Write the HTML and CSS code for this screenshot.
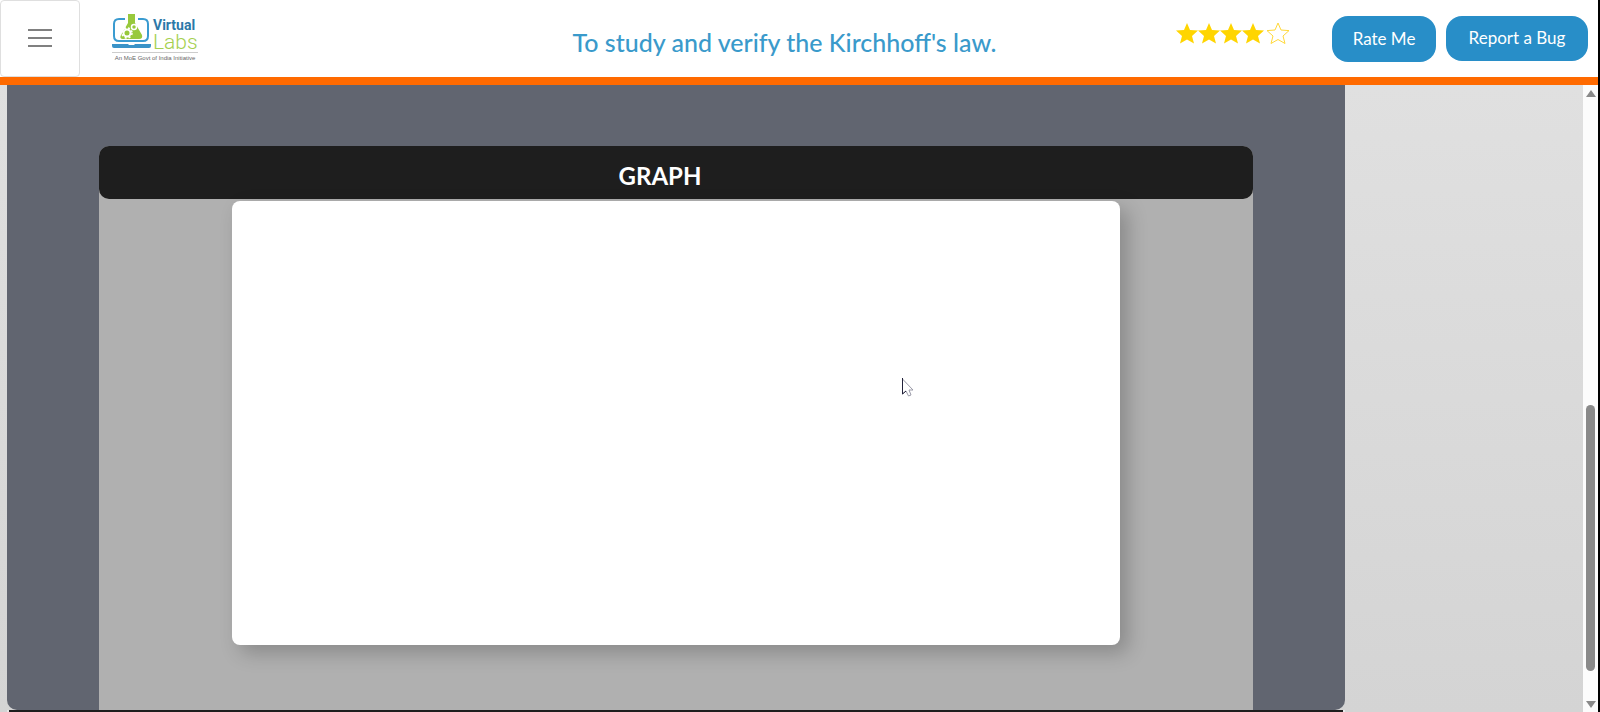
FILE: index.html
```html
<!DOCTYPE html>
<html lang="en">
<head>
<meta charset="utf-8">
<title>Virtual Labs</title>
<link rel="stylesheet" href="styles.css">
</head>
<body>
<header class="header">
  <button class="menu" type="button" aria-label="Menu"><span></span><span></span><span></span></button>
  <a class="logo" href="#" aria-label="Virtual Labs">
    <span class="logo-row">
      <svg class="logo-mark" width="39" height="34" viewBox="0 0 39 34">
        <path d="M13 5H7Q2 5 2 10V22Q2 27 7 27H31Q36 27 36 22V10Q36 5 31 5H26" fill="none" stroke="#3a9bd0" stroke-width="2"/>
        <path d="M16 0H23V9L30 21Q31 25 27 25H11Q7 25 9 21L16 9Z" fill="#98c93c"/>
        <circle cx="15" cy="19" r="3.500" fill="none" stroke="#fff" stroke-width="2"/>
        <circle cx="15" cy="19" r="5" fill="none" stroke="#fff" stroke-width="1.500" stroke-dasharray="2 2"/>
        <circle cx="22" cy="13" r="2.500" fill="none" stroke="#fff" stroke-width="1.500"/>
        <path d="M0 30H16L17 31H22L23 30H39V32Q39 34 37 34H2Q0 34 0 32Z" fill="#3a93c8"/>
      </svg>
      <span class="logo-name"><b>Virtual</b><i>Labs</i></span>
    </span>
    <small class="logo-tag">An MoE Govt of India Initiative</small>
  </a>
  <h1 class="title">To study and verify the Kirchhoff's law.</h1>
  <svg class="stars" width="116" height="22" viewBox="0 0 116 22" role="img" aria-label="4 of 5 stars">
    <defs><path id="star" d="M0-11L3-4L11-3.400L5 2L7 9.500L0 5.500L-7 9.500L-5 2L-11-3.400L-3-4Z"/></defs>
    <g fill="#ffd500">
      <use href="#star" x="12" y="12"/><use href="#star" x="34" y="12"/><use href="#star" x="56" y="12"/><use href="#star" x="78" y="12"/>
    </g>
    <use href="#star" x="103" y="12" fill="#fff" stroke="#ffd83a" stroke-width="1"/>
  </svg>
  <div class="actions">
    <button class="btn rate" type="button">Rate Me</button>
    <button class="btn" type="button">Report a Bug</button>
  </div>
</header>
<div class="body">
  <main class="content">
    <div class="panel">
      <section class="graph">
        <h2 class="graph-title">GRAPH</h2>
        <div class="plot"></div>
      </section>
    </div>
    <div class="next"></div>
  </main>
  <div class="scroll">
    <span class="arrow up"></span>
    <span class="thumb"></span>
    <span class="arrow down"></span>
  </div>
</div>
<svg class="cursor" width="12" height="19" viewBox="0 0 12 19">
  <path d="M.5 1V16L4 13L6.500 18L9 17L7 12H11Z" fill="#fff" stroke="#9a9aa8"/>
  <path d="M.5 0V16L4 13" fill="none" stroke="#22223a"/>
</svg>
</body>
</html>
```
FILE: styles.css
```css
* { box-sizing: border-box; }
body {
  margin: 0;
  height: 100vh;
  display: flex;
  flex-direction: column;
  overflow: hidden;
  border-right: 2px solid #000;
  background: #fff;
  font-family: Lato, "Open Sans", sans-serif;
}
.header {
  display: flex;
  align-items: flex-start;
  padding-right: 10px;
  border-bottom: 8px solid #ff6a00;
  background: #fff;
}
.menu {
  width: 80px;
  height: 77px;
  padding: 0 0 2px;
  display: flex;
  flex-direction: column;
  align-items: center;
  justify-content: center;
  gap: 6px;
  background: #fff;
  border: 1px solid #dfdfdf;
  border-radius: 4px;
}
.menu span { width: 24px; height: 2px; background: #808080; }
.logo {
  width: 86px;
  margin: 14px 0 0 32px;
  text-decoration: none;
}
.logo-row { display: flex; gap: 2px; height: 38px; }
.logo-mark { flex: none; }
.logo-name { display: flex; flex-direction: column; padding-top: 3px; }
.logo-name b { font: 700 14px/16px Roboto, sans-serif; color: #2c78a8; }
.logo-name i { font: 300 21px/19px Roboto, sans-serif; color: #a5d04f; }
.logo-tag {
  display: block;
  border-top: 1px solid #ccc;
  font: 6px/10px "Liberation Sans", sans-serif;
  text-align: center;
  white-space: nowrap;
  color: #666;
}
.title {
  flex: 1;
  margin: 0;
  padding: 26px 0 0 196px;
  text-align: center;
  white-space: nowrap;
  font-size: 25px;
  line-height: 32px;
  font-weight: 500;
  color: #3a9acb;
}
.stars { margin: 22px 41px 0 0; }
.actions { display: flex; align-items: flex-start; gap: 10px; padding-top: 16px; }
.btn {
  height: 45px;
  padding: 0 20px 2px;
  border: 0;
  border-radius: 16px;
  background: #288ec8;
  color: #fff;
  font-family: inherit;
  font-size: 17px;
  min-width: 142px;
}
.rate { height: 46px; min-width: 104px; }
.body { flex: 1; min-height: 0; display: flex; }
.content {
  flex: 1;
  display: flex;
  flex-direction: column;
  padding-left: 7px;
  background: linear-gradient(#e0e0e0, #d4d4d4);
}
.panel {
  flex: 1;
  width: 84.9%;
  padding-top: 61px;
  display: flex;
  justify-content: center;
  background: #616570;
  border-radius: 0 0 10px 10px;
}
.graph { width: 86.3%; background: #b0b0b0; border-radius: 10px 10px 0 0; }
.graph-title {
  margin: 0 0 2px;
  padding: 6px 32px 0 0;
  text-align: center;
  font-size: 24px;
  line-height: 47px;
  font-weight: 700;
  color: #fff;
  background: #1e1e1e;
  border-radius: 10px;
}
.plot {
  width: 76.9%;
  aspect-ratio: 2;
  margin: 0 auto;
  background: #fff;
  border-radius: 8px;
  box-shadow: 8px 8px 20px rgba(0, 0, 0, .22);
}
.next { width: 84.9%; height: 2px; border: solid #e8e8e8; border-width: 0 2px; background: #1e1e1e; }
.scroll {
  width: 15px;
  display: flex;
  flex-direction: column;
  align-items: center;
  padding: 5px 0 4px;
  background: #fcfcfc;
}
.arrow { border: solid transparent; border-width: 0 5px; }
.up { border-bottom: 7px solid #8a8a8a; }
.down { border-top: 7px solid #8a8a8a; }
.thumb { width: 9px; height: 43%; margin: auto 0 30px; border-radius: 5px; background: #8a8a8a; }
.cursor { position: absolute; left: 902px; top: 378px; }
```
